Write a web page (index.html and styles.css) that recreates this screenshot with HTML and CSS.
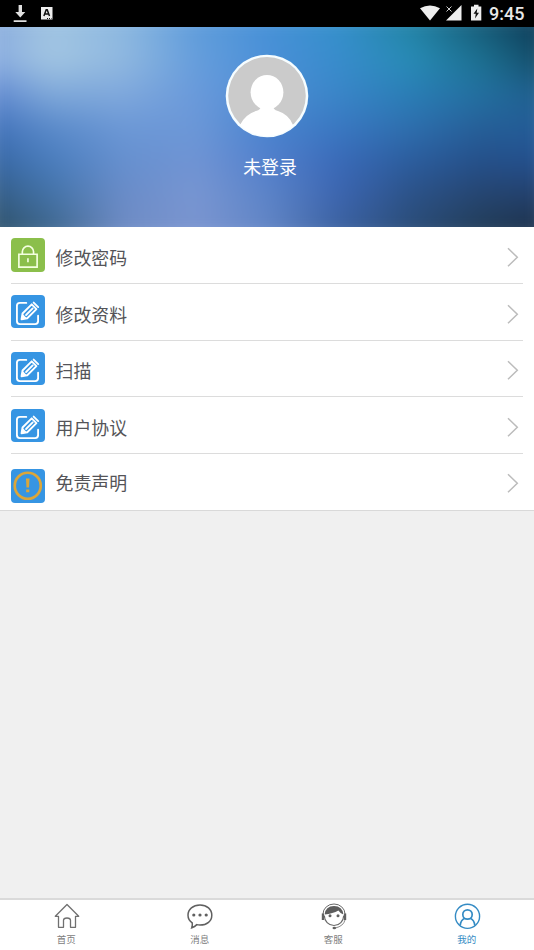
FILE: index.html
```
<!DOCTYPE html>
<html lang="zh-CN">
<head>
<meta charset="utf-8">
<title>我的</title>
<link rel="stylesheet" href="styles.css">
</head>
<body>
<svg width="0" height="0" class="defs">
  <symbol id="edit" viewBox="0 0 34 34">
    <g fill="none" stroke="#fff" stroke-width="1.9" stroke-linecap="round" stroke-linejoin="round">
      <path d="M15.500 8H9Q6 8 6 11v15.500q0 3 3 3h15.500q3 0 3-3V21"/>
      <path d="M11.700 18.800 21 9.500l4.800 4.800-9.300 9.300-5.800 1z M15.300 20.300l6.700-6.700M23 7.700l4.600 4.600"/>
    </g>
    <path d="M11.700 19l-1.200 5.500L16 23.500z" fill="#fff"/>
  </symbol>
  <symbol id="chevron" viewBox="0 0 12 20">
    <path d="M1 1.200 10.300 10.300 1 19.200" fill="none" stroke="#bcbcbc" stroke-width="1.500"/>
  </symbol>
</svg>
<div class="app">
  <div class="status">
    <svg class="status-left" width="60" height="27" viewBox="0 0 60 27">
      <path d="M18.600 5h3.400v7h3.300L20.300 17.500l-5-5.500h3.300zM13.700 20.200h12.800v1.700H13.700z" fill="#e0e0e0"/>
      <path d="M41 7h11.500v12.500H41z" fill="#eee"/>
      <path d="M43.900 16 46.200 9.700h1l2.300 6.300M44.900 14h3.600" fill="none" stroke="#111" stroke-width="1.500"/>
      <path d="M47 18.500h4.500" stroke="#111" stroke-dasharray="1 1"/>
    </svg>
    <svg width="66" height="27" viewBox="418 0 66 27">
      <path d="M420 8.300Q430 2.800 440 8.300L430 20.500z" fill="#eee"/>
      <path d="M461.500 5v15.500H446z" fill="#eee"/>
      <path d="M446.500 6.500l5 5m0-5l-5 5" stroke="#ccc"/>
      <path d="M471 6.500h3V4.800h4.500v1.700h2.800v14H471z" fill="#eee"/>
      <path d="M477.300 8.500l-3.800 5.300h2.300l-.8 4.700 4-5.700h-2.300z" fill="#111"/>
    </svg>
    <span class="clock">9:45</span>
  </div>
  <header class="profile">
    <div class="backdrop">
      <i class="mesh m0"></i><i class="mesh m1"></i><i class="mesh m2"></i><i class="mesh m3"></i><i class="mesh m4"></i><i class="mesh m5"></i><i class="mesh m6"></i>
    </div>
    <svg class="avatar" width="84" height="84" viewBox="0 0 84 84">
      <defs><clipPath id="face"><circle cx="42" cy="42" r="40"/></clipPath></defs>
      <circle cx="42" cy="42" r="41.300" fill="#f6fdff"/>
      <circle cx="42" cy="41.800" r="38.800" fill="#cbcbcb"/>
      <g clip-path="url(#face)" fill="#fff">
        <ellipse cx="42" cy="38.300" rx="16.400" ry="17.400"/>
        <path d="M36 50h12q-1 5.500 5 7Q64 60.500 68 71v13H15V71q5-10.500 16-14 6-1.500 5-7z"/>
      </g>
    </svg>
    <div class="name">未登录</div>
  </header>
  <main class="list">
    <div class="row">
      <svg class="icon green" viewBox="0 0 34 34"><g fill="none" stroke="#f4ffe0" stroke-width="1.700"><path d="M8 16.500h18.500v13H8zM11.500 16v-2a5.700 5.700 0 0 1 11.400 0v2M17.200 20.500v4"/></g></svg>
      <span class="label">修改密码</span><svg class="arrow"><use href="#chevron"/></svg>
    </div>
    <div class="row"><svg class="icon"><use href="#edit"/></svg><span class="label">修改资料</span><svg class="arrow"><use href="#chevron"/></svg></div>
    <div class="row"><svg class="icon"><use href="#edit"/></svg><span class="label">扫描</span><svg class="arrow"><use href="#chevron"/></svg></div>
    <div class="row"><svg class="icon"><use href="#edit"/></svg><span class="label">用户协议</span><svg class="arrow"><use href="#chevron"/></svg></div>
    <div class="row last">
      <svg class="icon low" viewBox="0 0 34 34"><circle cx="17" cy="17" r="13.200" fill="none" stroke="#dba63a" stroke-width="2.700"/><path d="M15.200 9.700h3.600l-.5 9h-2.600zM15.400 20.700h3.200v3h-3.200z" fill="#dba63a"/></svg>
      <span class="label">免责声明</span><svg class="arrow"><use href="#chevron"/></svg>
    </div>
  </main>
  <nav class="tabs">
    <div class="tab">
      <svg viewBox="0 0 28 28" fill="none" stroke="#707070" stroke-width="1.300" stroke-linejoin="round"><path d="M2.300 14.300 14 2.500l11.700 11.800h-3.200v11h-5v-7q0-2.300-3.500-2.300t-3.500 2.300v7h-5v-11z"/></svg>
      <span>首页</span>
    </div>
    <div class="tab">
      <svg viewBox="0 0 28 28"><path d="M6.200 20.800Q2 18 2 13.200C2 7.300 7 3 14 3s11.800 4.300 11.800 10.200S21 23 14 23q-1.700 0-3.200-.4-2 2-5 3.200.9-2.500.4-5z" fill="none" stroke="#606060" stroke-width="1.500"/><g fill="#606060"><circle cx="7.800" cy="13" r="1.600"/><circle cx="14" cy="13" r="1.600"/><circle cx="20.200" cy="13" r="1.600"/></g></svg>
      <span>消息</span>
    </div>
    <div class="tab">
      <svg viewBox="0 0 28 28"><path d="M4.300 13.500a9.700 10 0 0 0 19.400 0" fill="none" stroke="#686868" stroke-width="1.200"/><path d="M3 12a11 10 0 0 1 22 0" fill="none" stroke="#686868" stroke-width="1"/><path d="M4.600 12.500Q5.500 4 14 4t9.400 8.500q-3.500-1.500-5-4Q13 11.500 4.600 12.500z" fill="#5c5c5c"/><path d="M1.800 11.500h2.200v6.500H1.800zM24 11.500h2.200V18H24z" fill="#606060"/><path d="M25 18q-1.500 6-9.500 8" fill="none" stroke="#888"/><ellipse cx="14.300" cy="26" rx="1.800" ry="1.200" fill="#606060"/><circle cx="10" cy="13.800" r="1.500" fill="#606060"/><circle cx="18" cy="13.800" r="1.500" fill="#606060"/></svg>
      <span>客服</span>
    </div>
    <div class="tab active">
      <svg viewBox="0 0 28 28" fill="none" stroke="#348bc4" stroke-width="1.400"><circle cx="14.500" cy="14.300" r="12.100"/><circle cx="14.500" cy="12.500" r="4.700" stroke-width="1.700"/><path d="M7.200 23.500q.5-5.700 4.600-7.300M21.800 23.500q-.5-5.700-4.600-7.300" stroke-width="1.700"/></svg>
      <span>我的</span>
    </div>
  </nav>
</div>
</body>
</html>
```
FILE: styles.css
```
* { box-sizing: border-box; }
body { margin: 0; background: #f0f0f0; font-family: "Noto Sans CJK SC", sans-serif; }
.defs { position: absolute; }
.app { width: 534px; height: 950px; display: flex; flex-direction: column; overflow: hidden; }
.status { height: 27px; flex: none; background: #000; display: flex; align-items: center; }
.status-left { margin-right: auto; }
.clock { width: 50px; padding: 1px 0 0 5px; color: #e8e8e8; font: 500 18px/26px Roboto, sans-serif; }
.profile { position: relative; height: 200px; flex: none; display: flex; flex-direction: column; align-items: center; padding-top: 27px; overflow: hidden; }
.backdrop { position: absolute; inset: -20px; filter: blur(12px); }
.mesh { position: absolute; inset: 0; }
.m0 { background: linear-gradient(90deg, #86a8dc, #a0c4e2, #8cb8e0, #609ddb, #4791d7, #3590cb, #2384a6, #175c78, #0b3350); }
.m1 { background: linear-gradient(90deg, #86a9e0, #a3c6e2, #90b8e0, #669edc, #4b90d8, #388ccc, #288cb6, #1c7090, #124560); mask-image: linear-gradient(transparent 8%, #000 22%); }
.m2 { background: linear-gradient(90deg, #5c84cf, #80a9da, #80a9dc, #6a9adb, #4f8dd5, #3a86c8, #2a7eb6, #2370a0, #1f5c8a); mask-image: linear-gradient(transparent 22%, #000 36%); }
.m3 { background: linear-gradient(90deg, #3e6fb8, #5a8aca, #6c98d6, #6c98d8, #4a84cf, #3a78c2, #2e6fae, #265f98, #225c98); mask-image: linear-gradient(transparent 36%, #000 50%); }
.m4 { background: linear-gradient(90deg, #3363a0, #4a7dbd, #6690cf, #7094d4, #5380cd, #3a6ab8, #2c5d9e, #25508a, #245090); mask-image: linear-gradient(transparent 50%, #000 64%); }
.m5 { background: linear-gradient(90deg, #30587f, #4473a8, #6a8cc8, #7896d2, #5c84c8, #3c65b0, #2c5288, #264570, #223f6c); mask-image: linear-gradient(transparent 64%, #000 78%); }
.m6 { background: linear-gradient(90deg, #2a4c60, #40688f, #6f8cc4, #7b95d0, #6386c6, #3c62a0, #2b4d78, #223d58, #1c2e48); mask-image: linear-gradient(transparent 78%, #000 92%); }
.avatar { position: relative; }
.name { position: relative; margin: 15px 0 0 6px; color: #fff; font-size: 17.9px; line-height: 26px; }
.list { flex: none; height: 284px; background: #fff; padding: 0 11px; display: grid; grid-template-rows: repeat(4, 56.8px) 1fr; border-bottom: 1px solid #d9d9d9; }
.row { display: flex; align-items: center; border-bottom: 1px solid #dcdcdc; }
.row.last { border-bottom: 0; }
.icon { width: 33.5px; height: 33.5px; flex: none; border-radius: 4px; background: #3695e3; }
.icon.green { background: #8bbf4b; }
.icon.low { margin-top: 8px; }
.label { flex: 1; margin: 4px 0 0 11px; color: #545458; font-size: 17.9px; line-height: 26px; }
.last .label { margin-top: 0; }
.arrow { width: 12px; height: 20px; margin: 4px 4px 0 0; }
.last .arrow { margin-top: 2px; }
.tabs { margin-top: auto; height: 52px; flex: none; background: #fff; border-top: 2px solid #dadada; display: grid; grid-template-columns: repeat(4, 1fr); }
.tab { display: flex; flex-direction: column; align-items: center; padding-top: 2px; color: #808080; font-size: 9.5px; line-height: 14px; }
.tab span { margin-right: 1px; }
.tab svg { width: 28px; height: 28px; margin-bottom: 2px; }
.tab.active { color: #348bc4; }
```
